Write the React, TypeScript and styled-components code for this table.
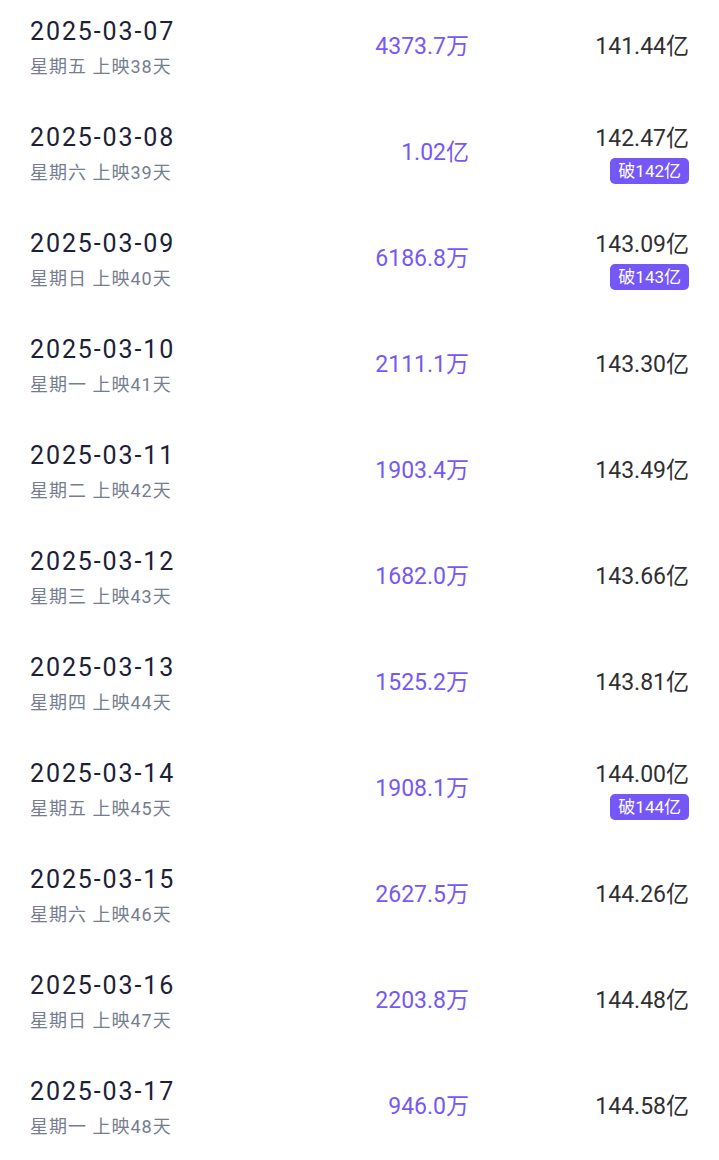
import React from 'react';
import styled, { createGlobalStyle } from 'styled-components';

interface DayRow {
  date: string;
  weekday: string;
  day: number;
  daily: string;
  total: string;
  badge?: string;
}

const rows: DayRow[] = [
  { date: '2025-03-07', weekday: '星期五', day: 38, daily: '4373.7万', total: '141.44亿' },
  { date: '2025-03-08', weekday: '星期六', day: 39, daily: '1.02亿', total: '142.47亿', badge: '破142亿' },
  { date: '2025-03-09', weekday: '星期日', day: 40, daily: '6186.8万', total: '143.09亿', badge: '破143亿' },
  { date: '2025-03-10', weekday: '星期一', day: 41, daily: '2111.1万', total: '143.30亿' },
  { date: '2025-03-11', weekday: '星期二', day: 42, daily: '1903.4万', total: '143.49亿' },
  { date: '2025-03-12', weekday: '星期三', day: 43, daily: '1682.0万', total: '143.66亿' },
  { date: '2025-03-13', weekday: '星期四', day: 44, daily: '1525.2万', total: '143.81亿' },
  { date: '2025-03-14', weekday: '星期五', day: 45, daily: '1908.1万', total: '144.00亿', badge: '破144亿' },
  { date: '2025-03-15', weekday: '星期六', day: 46, daily: '2627.5万', total: '144.26亿' },
  { date: '2025-03-16', weekday: '星期日', day: 47, daily: '2203.8万', total: '144.48亿' },
  { date: '2025-03-17', weekday: '星期一', day: 48, daily: '946.0万', total: '144.58亿' },
];

const GlobalStyle = createGlobalStyle`
  html, body {
    margin: 0;
    padding: 0;
    background: #ffffff;
    overflow: hidden;
  }
  body {
    font-family: Roboto, "Noto Sans CJK SC", sans-serif;
  }
`;

const List = styled.div`
  margin-top: -6px;
  display: flex;
  flex-direction: column;
`;

const Row = styled.div`
  height: 106px;
  box-sizing: border-box;
  padding: 0 30px;
  display: grid;
  grid-template-columns: 1fr auto 220px;
  align-items: center;
`;

const DateCell = styled.div`
  display: flex;
  flex-direction: column;
`;

const DateText = styled.div`
  font-size: 25px;
  line-height: 34px;
  color: #1b2137;
  letter-spacing: 1.9px;
`;

const SubText = styled.div`
  margin-top: 5px;
  font-size: 18px;
  line-height: 26px;
  color: #767d8f;
  letter-spacing: 1px;
`;

const Daily = styled.div`
  font-size: 23px;
  line-height: 34px;
  color: #7658f6;
  text-align: right;
`;

const TotalCell = styled.div`
  display: flex;
  flex-direction: column;
  align-items: flex-end;
`;

const Total = styled.div`
  font-size: 23px;
  line-height: 34px;
  color: #2f2f33;
`;

const Badge = styled.span`
  margin-top: 2px;
  height: 26px;
  padding: 0 8px;
  border-radius: 5px;
  background: #7556f7;
  color: #ffffff;
  font-size: 17px;
  line-height: 26px;
`;

export default function App() {
  return (
    <>
      <GlobalStyle />
      <List>
        {rows.map((r) => (
          <Row key={r.date}>
            <DateCell>
              <DateText>{r.date}</DateText>
              <SubText>
                {r.weekday} 上映{r.day}天
              </SubText>
            </DateCell>
            <Daily>{r.daily}</Daily>
            <TotalCell>
              <Total>{r.total}</Total>
              {r.badge && <Badge>{r.badge}</Badge>}
            </TotalCell>
          </Row>
        ))}
      </List>
    </>
  );
}
